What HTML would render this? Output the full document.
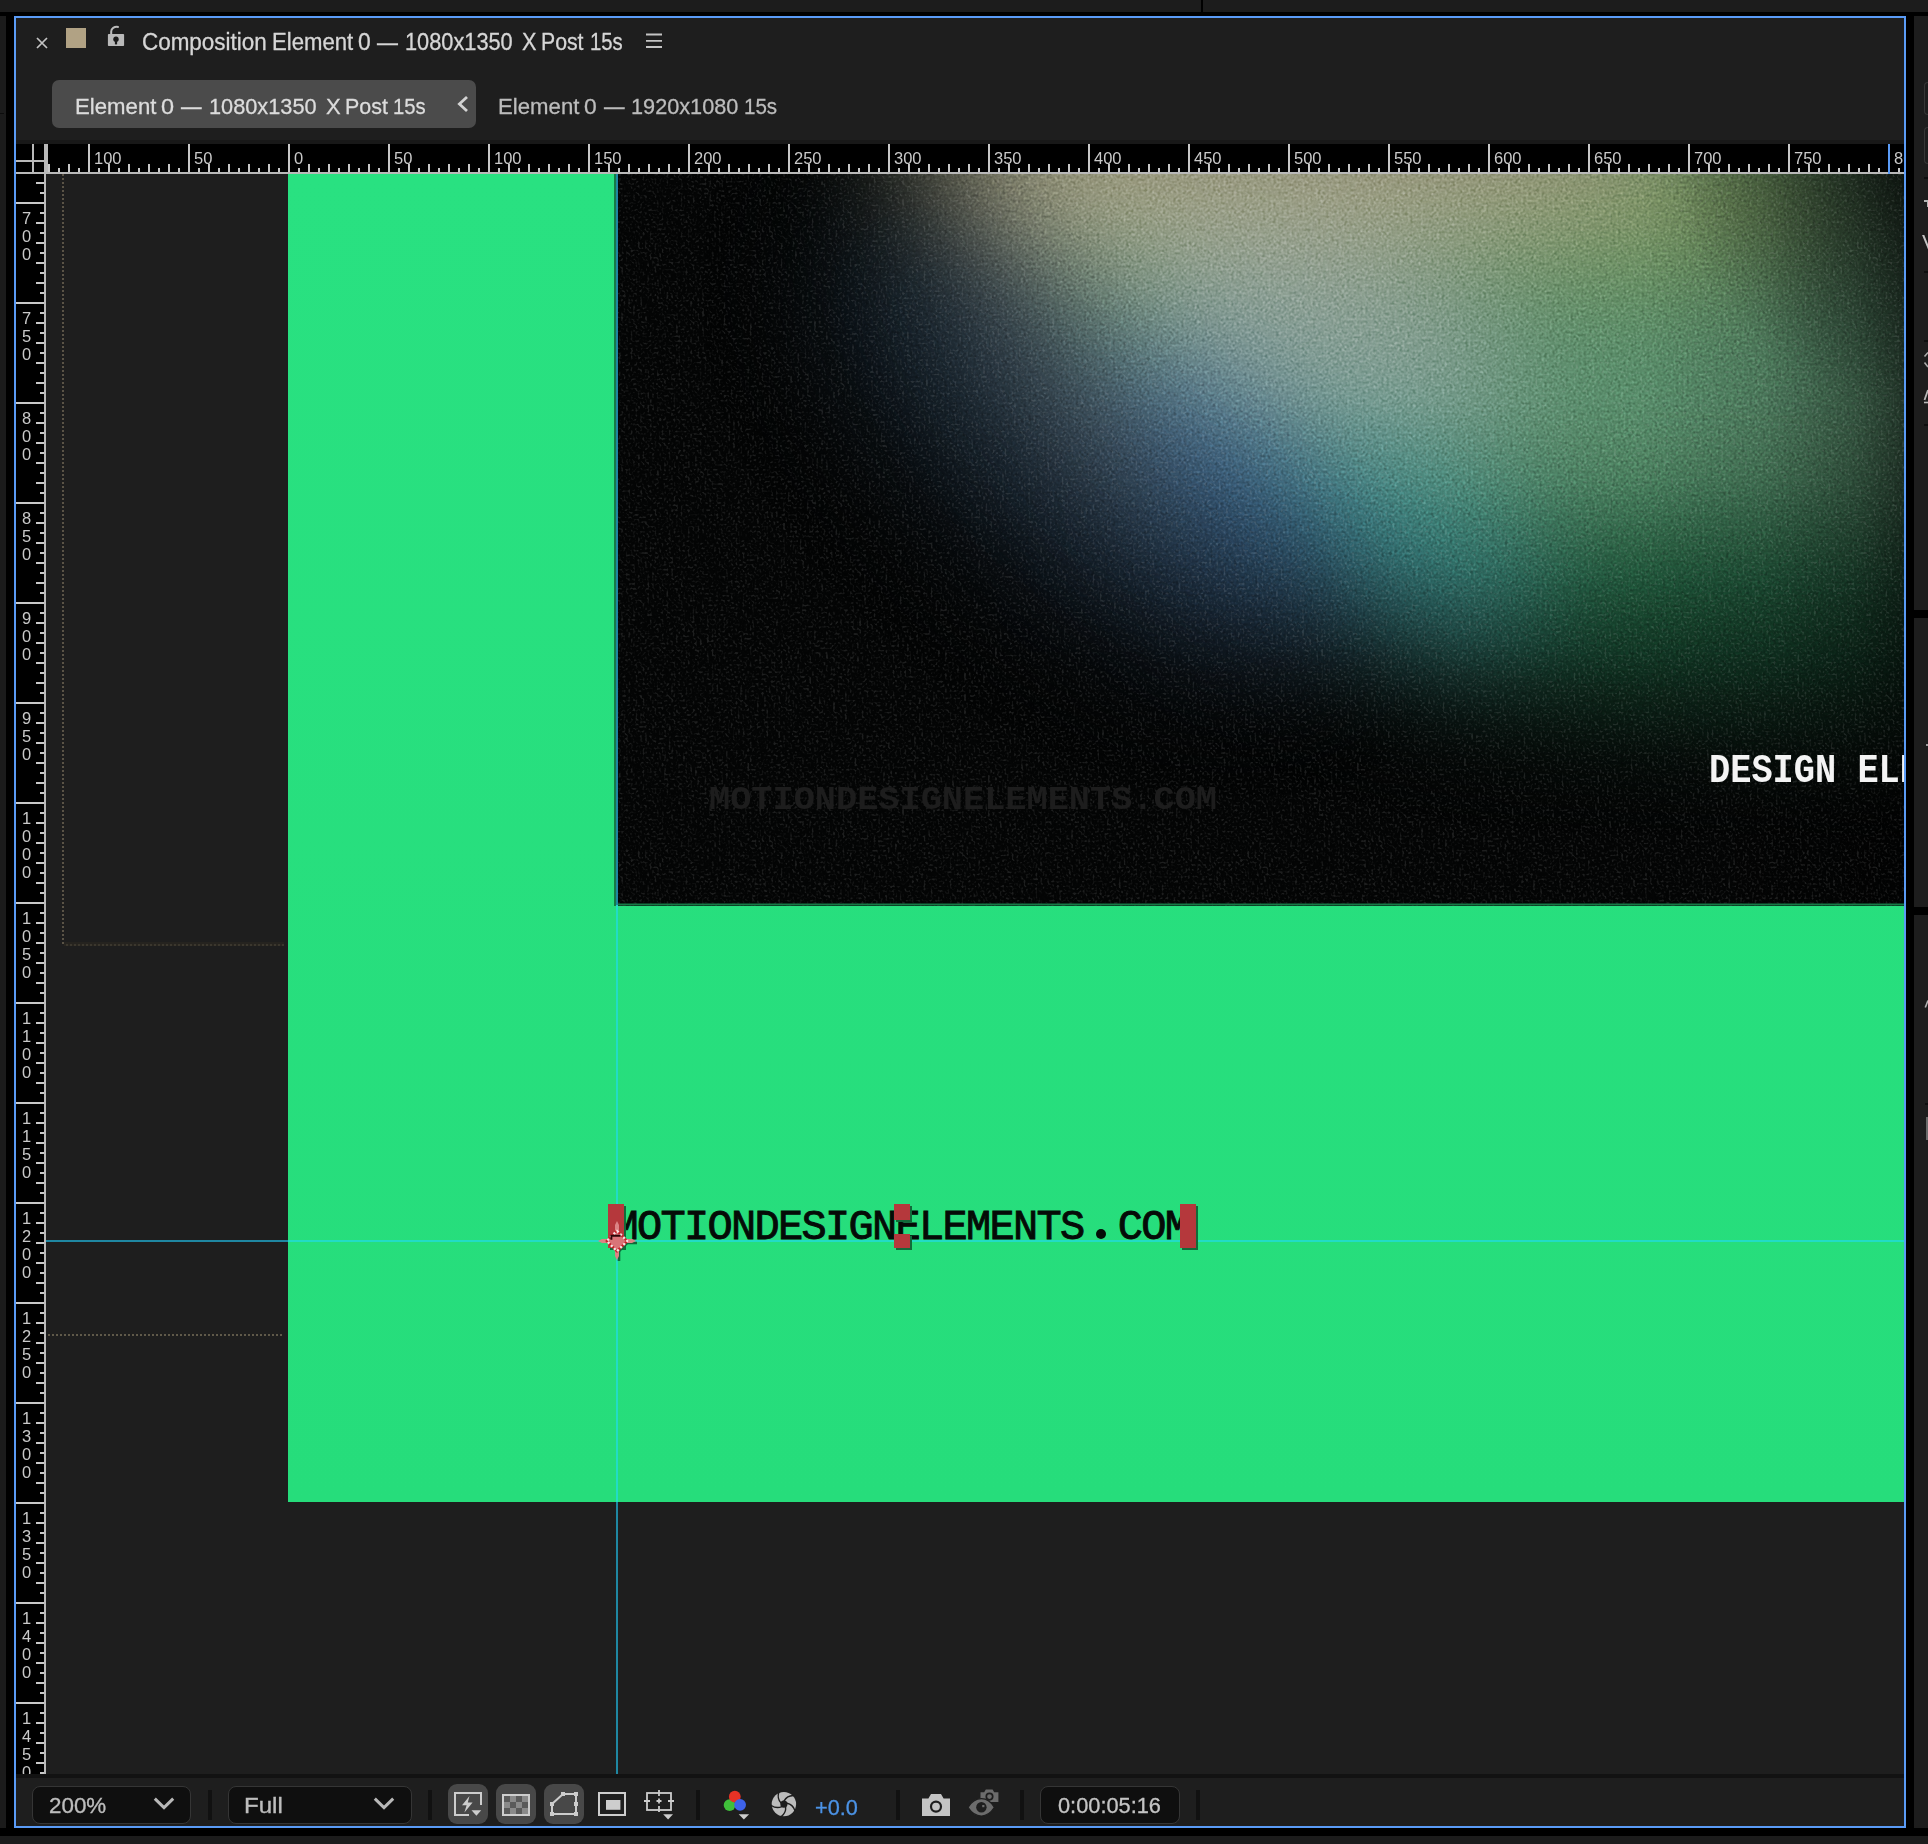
<!DOCTYPE html>
<html lang="en">
<head>
<meta charset="utf-8">
<title>Composition Element 0</title>
<style>
html,body{margin:0;padding:0;overflow:hidden;}
body{width:1928px;height:1844px;overflow:hidden;background:#000;position:relative;font-family:"Liberation Sans",sans-serif;color:#cfcfcf;}
.abs{position:absolute;}
.box{position:absolute;display:block;}
/* outer chrome */
#topbar{left:0;top:0;width:1928px;height:12px;background:#1c1c1c;}
#topdiv{left:1201px;top:0;width:2px;height:12px;background:#000;}
#leftstrip{left:0;top:16px;width:6px;height:1812px;background:#1b1b1b;}
#botbar{left:0;top:1836px;width:1928px;height:8px;background:#1c1c1c;}
#rightstrip{left:1914px;top:16px;width:14px;height:1812px;background:#1d1d1d;}
/* panel */
#panel{left:14px;top:16px;width:1888px;height:1808px;border:2px solid #5a9bf6;background:#1e1e1e;}
#hdrshade{left:16px;top:140px;width:1888px;height:4px;background:#181818;}
/* header text */
.t{position:absolute;white-space:pre;transform-origin:0 0;line-height:1;}
/* rulers */
#hruler{left:46px;top:144px;width:1858px;height:28px;background:#000;overflow:hidden;}
#hruler .tk{position:absolute;left:0;top:0;width:100%;height:28px;}
#hruler span{position:absolute;top:7.3px;font-size:16.5px;line-height:15px;color:#c9c9c9;white-space:pre;}
#hline{left:16px;top:172px;width:1888px;height:2px;background:#b9b9b9;}
#corner{left:16px;top:144px;width:28px;height:28px;background:#000;}
#vruler{left:16px;top:174px;width:28px;height:1600px;background:#000;overflow:hidden;}
#vruler span{position:absolute;left:0;width:21px;text-align:center;font-size:16.5px;line-height:18px;height:18px;color:#c9c9c9;}
#vline{left:44px;top:144px;width:2px;height:1630px;background:#b9b9b9;}
/* viewer */
#viewer{left:46px;top:174px;width:1858px;height:1600px;background:#1e1e1e;overflow:hidden;}
#comp{position:absolute;left:242px;top:0;width:1616px;height:1328px;background:linear-gradient(180deg,#29e181,#26dd7b);}
/* toolbar */
#tbshade{left:16px;top:1774px;width:1888px;height:4px;background:#121212;}
.dd{position:absolute;box-sizing:border-box;border:1.5px solid #353535;background:#0f0f0f;border-radius:8px;}
.sep{position:absolute;width:4px;background:#111;top:1790px;height:30px;}
.btn{position:absolute;top:1784px;width:40px;height:40px;border-radius:9px;background:#484848;}
svg{position:absolute;overflow:visible;}
</style>
</head>
<body>
<div class="box" id="topbar"></div>
<div class="box" id="topdiv"></div>
<div class="box" id="leftstrip"></div>
<div class="box" style="left:0;top:113px;width:4px;height:1px;background:#0c0c0c"></div>
<div class="box" id="botbar"></div>
<div class="box" id="rightstrip"></div>
<div class="box" id="panel"></div>

<!-- header row -->
<svg style="left:36px;top:37px" width="12" height="12" viewBox="0 0 12 12"><path d="M1 1L11 11M11 1L1 11" stroke="#c4c4c4" stroke-width="1.7" fill="none"/></svg>
<div class="box" style="left:66px;top:28px;width:20px;height:20px;background:#b1a284"></div>
<svg style="left:107px;top:25px" width="18" height="22" viewBox="0 0 18 22">
<path d="M4.2 9.6V6.6C4.2 3.3 7.2 1.5 11 1.9" stroke="#bdbdbd" stroke-width="2" fill="none" stroke-linecap="round"/>
<rect x="0.9" y="8.9" width="16.2" height="12.1" rx="0.8" fill="#b9b9b9"/>
<circle cx="9" cy="14.3" r="2.7" fill="#1a1a1a"/><rect x="7.9" y="14.6" width="2.2" height="4.8" fill="#1a1a1a"/>
</svg>
<span class="t" style="left:141.56px;top:30.6px;font-size:23px;color:#d6d6d6;transform:scaleX(0.9753);-webkit-text-stroke:0.3px #d6d6d6">Composition</span><span class="t" style="left:271.68px;top:30.6px;font-size:23px;color:#d6d6d6;transform:scaleX(0.9622);-webkit-text-stroke:0.3px #d6d6d6">Element</span><span class="t" style="left:357.51px;top:30.6px;font-size:23px;color:#d6d6d6;transform:scaleX(0.9928);-webkit-text-stroke:0.3px #d6d6d6">0</span><span class="t" style="left:377.40px;top:30.6px;font-size:23px;color:#d6d6d6;transform:scaleX(0.9087);-webkit-text-stroke:0.3px #d6d6d6">—</span><span class="t" style="left:404.80px;top:30.6px;font-size:23px;color:#d6d6d6;transform:scaleX(0.9461);-webkit-text-stroke:0.3px #d6d6d6">1080x1350</span><span class="t" style="left:522.14px;top:30.6px;font-size:23px;color:#d6d6d6;transform:scaleX(0.9434);-webkit-text-stroke:0.3px #d6d6d6">X</span><span class="t" style="left:541.45px;top:30.6px;font-size:23px;color:#d6d6d6;transform:scaleX(0.9235);-webkit-text-stroke:0.3px #d6d6d6">Post</span><span class="t" style="left:589.71px;top:30.6px;font-size:23px;color:#d6d6d6;transform:scaleX(0.8830);-webkit-text-stroke:0.3px #d6d6d6">15s</span>
<svg style="left:646px;top:33px" width="16" height="16" viewBox="0 0 16 16"><path d="M0 1.5H16M0 7.8H16M0 14H16" stroke="#c4c4c4" stroke-width="1.8" fill="none"/></svg>

<!-- tabs -->
<div class="box" style="left:52px;top:80px;width:424px;height:48px;border-radius:7px;background:#4b4b4b"></div>
<span class="t" style="left:74.54px;top:95.6px;font-size:22.6px;color:#dcdcdc;transform:scaleX(0.9819);-webkit-text-stroke:0.3px #dcdcdc">Element</span><span class="t" style="left:160.66px;top:95.6px;font-size:22.6px;color:#dcdcdc;transform:scaleX(1.0372);-webkit-text-stroke:0.3px #dcdcdc">0</span><span class="t" style="left:180.90px;top:95.6px;font-size:22.6px;color:#dcdcdc;transform:scaleX(0.9098);-webkit-text-stroke:0.3px #dcdcdc">—</span><span class="t" style="left:208.71px;top:95.6px;font-size:22.6px;color:#dcdcdc;transform:scaleX(0.9619);-webkit-text-stroke:0.3px #dcdcdc">1080x1350</span><span class="t" style="left:325.50px;top:95.6px;font-size:22.6px;color:#dcdcdc;transform:scaleX(0.9744);-webkit-text-stroke:0.3px #dcdcdc">X</span><span class="t" style="left:344.50px;top:95.6px;font-size:22.6px;color:#dcdcdc;transform:scaleX(0.9482);-webkit-text-stroke:0.3px #dcdcdc">Post</span><span class="t" style="left:393.21px;top:95.6px;font-size:22.6px;color:#dcdcdc;transform:scaleX(0.8979);-webkit-text-stroke:0.3px #dcdcdc">15s</span>
<svg style="left:457px;top:96px" width="12" height="16" viewBox="0 0 12 16"><path d="M10 1L2.4 8L10 15" stroke="#d4d4d4" stroke-width="2.8" fill="none"/></svg>
<span class="t" style="left:497.54px;top:95.6px;font-size:22.6px;color:#bcbcbc;transform:scaleX(0.9819);-webkit-text-stroke:0.3px #bcbcbc">Element</span><span class="t" style="left:583.99px;top:95.6px;font-size:22.6px;color:#bcbcbc;transform:scaleX(1.0092);-webkit-text-stroke:0.3px #bcbcbc">0</span><span class="t" style="left:603.50px;top:95.6px;font-size:22.6px;color:#bcbcbc;transform:scaleX(0.9098);-webkit-text-stroke:0.3px #bcbcbc">—</span><span class="t" style="left:631.21px;top:95.6px;font-size:22.6px;color:#bcbcbc;transform:scaleX(0.9600);-webkit-text-stroke:0.3px #bcbcbc">1920x1080</span><span class="t" style="left:744.29px;top:95.6px;font-size:22.6px;color:#bcbcbc;transform:scaleX(0.9097);-webkit-text-stroke:0.3px #bcbcbc">15s</span>

<div class="box" id="hdrshade"></div>

<!-- rulers -->
<div class="box" id="corner">
  <div class="abs" style="left:16px;top:0;width:2px;height:28px;background:#b9b9b9"></div>
  <div class="abs" style="left:0;top:16px;width:28px;height:2px;background:#b9b9b9"></div>
</div>
<div class="box" id="hruler">
  <div class="tk" style="background:
    repeating-linear-gradient(90deg,transparent 0,transparent 42px,#c9c9c9 42px,#c9c9c9 44px,transparent 44px,transparent 100px);"></div>
  <div class="tk" style="top:20px;height:8px;background:
    repeating-linear-gradient(90deg,transparent 0,transparent 2px,#c9c9c9 2px,#c9c9c9 4px,transparent 4px,transparent 20px);"></div>
  <div class="tk" style="top:24px;height:4px;background:
    repeating-linear-gradient(90deg,transparent 0,transparent 12px,#c9c9c9 12px,#c9c9c9 14px,transparent 14px,transparent 20px);"></div>
  <div class="abs" style="left:0;top:0;width:1858px;height:28px;will-change:transform"><span style="left:48.0px">100</span><span style="left:148.0px">50</span><span style="left:248.0px">0</span><span style="left:348.0px">50</span><span style="left:448.0px">100</span><span style="left:548.0px">150</span><span style="left:648.0px">200</span><span style="left:748.0px">250</span><span style="left:848.0px">300</span><span style="left:948.0px">350</span><span style="left:1048.0px">400</span><span style="left:1148.0px">450</span><span style="left:1248.0px">500</span><span style="left:1348.0px">550</span><span style="left:1448.0px">600</span><span style="left:1548.0px">650</span><span style="left:1648.0px">700</span><span style="left:1748.0px">750</span><span style="left:1848.0px">800</span></div>
</div>
<div class="box" id="vruler">
  <div class="abs" style="left:0;top:0;width:28px;height:1600px;background:
    repeating-linear-gradient(180deg,transparent 0,transparent 28px,#c9c9c9 28px,#c9c9c9 30px,transparent 30px,transparent 100px);"></div>
  <div class="abs" style="left:20px;top:0;width:8px;height:1600px;background:
    repeating-linear-gradient(180deg,transparent 0,transparent 8px,#c9c9c9 8px,#c9c9c9 10px,transparent 10px,transparent 20px);"></div>
  <div class="abs" style="left:24px;top:0;width:4px;height:1600px;background:
    repeating-linear-gradient(180deg,transparent 0,transparent 18px,#c9c9c9 18px,#c9c9c9 20px,transparent 20px,transparent 20px);"></div>
  <div class="abs" style="left:0;top:0;width:28px;height:1600px;will-change:transform"><span style="top:35px">7</span><span style="top:53px">0</span><span style="top:71px">0</span><span style="top:135px">7</span><span style="top:153px">5</span><span style="top:171px">0</span><span style="top:235px">8</span><span style="top:253px">0</span><span style="top:271px">0</span><span style="top:335px">8</span><span style="top:353px">5</span><span style="top:371px">0</span><span style="top:435px">9</span><span style="top:453px">0</span><span style="top:471px">0</span><span style="top:535px">9</span><span style="top:553px">5</span><span style="top:571px">0</span><span style="top:635px">1</span><span style="top:653px">0</span><span style="top:671px">0</span><span style="top:689px">0</span><span style="top:735px">1</span><span style="top:753px">0</span><span style="top:771px">5</span><span style="top:789px">0</span><span style="top:835px">1</span><span style="top:853px">1</span><span style="top:871px">0</span><span style="top:889px">0</span><span style="top:935px">1</span><span style="top:953px">1</span><span style="top:971px">5</span><span style="top:989px">0</span><span style="top:1035px">1</span><span style="top:1053px">2</span><span style="top:1071px">0</span><span style="top:1089px">0</span><span style="top:1135px">1</span><span style="top:1153px">2</span><span style="top:1171px">5</span><span style="top:1189px">0</span><span style="top:1235px">1</span><span style="top:1253px">3</span><span style="top:1271px">0</span><span style="top:1289px">0</span><span style="top:1335px">1</span><span style="top:1353px">3</span><span style="top:1371px">5</span><span style="top:1389px">0</span><span style="top:1435px">1</span><span style="top:1453px">4</span><span style="top:1471px">0</span><span style="top:1489px">0</span><span style="top:1535px">1</span><span style="top:1553px">4</span><span style="top:1571px">5</span><span style="top:1589px">0</span></div>
</div>
<div class="box" id="hline"></div>
<div class="box" id="vline"></div>
<div class="box" style="left:44px;top:144px;width:4px;height:30px;background:#b9b9b9"></div>
<div class="box" style="left:1888px;top:144px;width:2px;height:30px;background:#5a9bf6"></div>

<!-- viewer -->
<div class="box" id="viewer">
  <!-- dotted layer outlines -->
  <div class="abs" style="left:16px;top:0;width:2px;height:770px;background:repeating-linear-gradient(180deg,#5a5346 0,#5a5346 2px,transparent 2px,transparent 4px)"></div>
  <div class="abs" style="left:18px;top:768px;width:220px;height:2px;background:#25231f"></div><div class="abs" style="left:18px;top:770px;width:220px;height:2px;background:repeating-linear-gradient(90deg,#28251f 0,#28251f 2px,#3b372e 2px,#3b372e 4px)"></div>
  <div class="abs" style="left:2px;top:1160px;width:236px;height:2px;background:repeating-linear-gradient(90deg,#5f5949 0,#5f5949 2px,transparent 2px,transparent 4px)"></div>
  <div id="comp"></div>
  <svg style="left:568px;top:0;isolation:isolate" width="1290" height="732" viewBox="614 174 1290 732">
  <defs>
    <filter id="b80" filterUnits="userSpaceOnUse" x="300" y="-200" width="2000" height="1500" color-interpolation-filters="sRGB"><feGaussianBlur stdDeviation="72"/></filter>
    <filter id="b60" filterUnits="userSpaceOnUse" x="300" y="-200" width="2000" height="1500" color-interpolation-filters="sRGB"><feGaussianBlur stdDeviation="60"/></filter>
    <filter id="grain" x="0" y="0" width="100%" height="100%" color-interpolation-filters="sRGB">
      <feTurbulence type="fractalNoise" baseFrequency="0.38" numOctaves="1" seed="7"/>
      <feColorMatrix type="matrix" values="1 1 1 0 -1  1 1 1 0 -1  1 1 1 0 -1  0 0 0 0 1"/>
    </filter>
    <filter id="specks" x="0" y="0" width="100%" height="100%" color-interpolation-filters="sRGB">
      <feTurbulence type="fractalNoise" baseFrequency="0.42" numOctaves="1" seed="23"/>
      <feColorMatrix type="matrix" values="0 0 0 0 1  0 0 0 0 1  0 0 0 0 1  3 3 0 0 -3.05"/>
    </filter>
    <linearGradient id="gedge" x1="0" x2="1" y1="0" y2="0"><stop offset="0" stop-color="#000" stop-opacity="0"/><stop offset="0.45" stop-color="#000" stop-opacity="0.16"/><stop offset="0.8" stop-color="#000" stop-opacity="0.42"/><stop offset="1" stop-color="#000" stop-opacity="0.66"/></linearGradient>
    <radialGradient id="gcorner" cx="1930" cy="150" r="260" gradientUnits="userSpaceOnUse"><stop offset="0" stop-color="#000" stop-opacity="0.7"/><stop offset="0.45" stop-color="#000" stop-opacity="0.36"/><stop offset="1" stop-color="#000" stop-opacity="0"/></radialGradient>
    <clipPath id="imgclip"><rect x="614" y="174" width="1290" height="732"/></clipPath>
    <linearGradient id="gfall" x1="0" x2="0" y1="400" y2="840" gradientUnits="userSpaceOnUse">
      <stop offset="0" stop-color="#fff"/><stop offset="0.18" stop-color="#ececec"/><stop offset="0.36" stop-color="#c4c4c4"/><stop offset="0.545" stop-color="#8a8a8a"/><stop offset="0.68" stop-color="#565656"/><stop offset="0.82" stop-color="#242424"/><stop offset="1" stop-color="#000"/>
    </linearGradient>
    <mask id="glow" maskUnits="userSpaceOnUse" x="614" y="174" width="1290" height="732">
      <g filter="url(#b80)">
        <path d="M905 60C975 315 1078 458 1158 518C1258 593 1358 668 1528 748L2100 830L2100 60Z" fill="#fff"/>
      </g>
    </mask>
    <mask id="fall" maskUnits="userSpaceOnUse" x="614" y="174" width="1290" height="732">
      <rect x="614" y="174" width="1290" height="732" fill="url(#gfall)"/>
    </mask>
  </defs>
  <rect x="614" y="174" width="1290" height="732" fill="#030404"/>
  <g clip-path="url(#imgclip)">
    <g filter="url(#b60)"><ellipse cx="1075" cy="440" rx="300" ry="120" fill="#131e29" transform="rotate(42 1075 440)"/></g>
    <g mask="url(#fall)"><g mask="url(#glow)">
      <rect x="614" y="174" width="1290" height="732" fill="#578b69"/>
      <g filter="url(#b60)">
        <ellipse cx="1700" cy="700" rx="400" ry="170" fill="#1f6a44"/>
        <ellipse cx="1620" cy="190" rx="250" ry="88" fill="#718e56"/>
        <ellipse cx="1345" cy="605" rx="190" ry="160" fill="#3f9691"/>
        <ellipse cx="1145" cy="568" rx="190" ry="230" fill="#3b648c" transform="rotate(-40 1145 568)"/>
        <ellipse cx="990" cy="360" rx="100" ry="250" fill="#566670" transform="rotate(-33 990 360)"/>
        <ellipse cx="1200" cy="150" rx="480" ry="110" fill="#a19e81"/>
        <ellipse cx="1325" cy="335" rx="200" ry="88" fill="#879e95" transform="rotate(15 1325 335)"/>
      </g>
    </g></g>
    <rect x="1640" y="174" width="270" height="732" fill="url(#gedge)"/>
    <rect x="1600" y="174" width="310" height="420" fill="url(#gcorner)"/>
  </g>
  <rect x="614" y="174" width="1290" height="732" filter="url(#grain)" style="mix-blend-mode:overlay" opacity="0.2"/>
  <rect x="614" y="174" width="1290" height="732" filter="url(#specks)" opacity="0.1"/>
  <text x="709" y="808.5" font-family="Liberation Mono" font-weight="700" font-size="33.5" fill="#1d1d1d" textLength="508" lengthAdjust="spacingAndGlyphs">MOTIONDESIGNELEMENTS.COM</text>
  <text x="1709" y="781.5" font-family="Liberation Mono" font-weight="700" font-size="40.5" fill="#f4f4f4" textLength="212" lengthAdjust="spacingAndGlyphs" clip-path="url(#imgclip)">DESIGN ELE</text>
  <rect x="614" y="174" width="2" height="732" fill="#167a46"/>
  <rect x="614" y="903.5" width="1290" height="2" fill="#167a46"/>
</svg>

  <!-- guides -->
<div class="abs" style="left:570px;top:0;width:2px;height:1600px;background:#1f87a2"></div>
<div class="abs" style="left:570px;top:731px;width:2px;height:597px;background:#22dcc6"></div>
<div class="abs" style="left:0;top:1066px;width:1858px;height:2px;background:#1f87a2"></div>
<div class="abs" style="left:242px;top:1066px;width:1616px;height:2px;background:#22dcc6"></div>
<!-- text layer -->
<div class="t" id="maintext" style="left:567.5px;top:1033.4px;font-family:'Liberation Mono',monospace;font-weight:400;font-size:42px;letter-spacing:-1.7px;color:#050b07;-webkit-text-stroke:0.9px #050b07;">MOTIONDESIGNELEMENTS<span style="display:inline-block;width:10px;height:10px;border-radius:50%;background:#050b07;margin:0 12.05px"></span>COM</div>
<!-- handles -->
<div class="abs" style="left:562px;top:1030px;width:16px;height:44px;background:#b5383c;box-shadow:2px 2px 0 #116a3a"></div>
<div class="abs" style="left:848px;top:1030px;width:16px;height:16px;background:#b5383c;box-shadow:2px 2px 0 #116a3a"></div>
<div class="abs" style="left:848px;top:1060px;width:16px;height:14px;background:#b5383c;box-shadow:2px 2px 0 #116a3a"></div>
<div class="abs" style="left:1134px;top:1030px;width:16px;height:44px;background:#b5383c;box-shadow:2px 2px 0 #116a3a"></div>
<!-- anchor point -->
<svg style="left:551px;top:1046px" width="40" height="42" viewBox="-20 -21 40 42">
  <g transform="translate(2 2)"><path d="M6 0H18M0 6V18" stroke="#0f6a3a" stroke-width="2.6" fill="none"/><rect x="-7" y="-7" width="14" height="14" transform="rotate(45)" fill="#0f6a3a"/></g>
  <path d="M-19 0L-15 -2H15L19 0L15 2H-15ZM0 -20L2 -16V15L0 19L-2 15V-16Z" fill="#db8485"/>
  <rect x="-7.2" y="-7.2" width="14.4" height="14.4" transform="rotate(45)" fill="#d97478" stroke="#c5252c" stroke-width="2.4"/>
  <rect x="-7.2" y="-7.2" width="14.4" height="14.4" transform="rotate(45)" fill="none" stroke="#f7e4e4" stroke-width="2.4" stroke-dasharray="2.2 2.2"/>
  <path d="M-5.6 -1.2V-5.2H3.6" stroke="#2a0506" stroke-width="1.9" fill="none"/>
</svg>

</div>

<div class="box" id="tbshade"></div>
<!-- zoom dropdown -->
<div class="dd" style="left:32px;top:1786px;width:159px;height:38px"></div>
<div class="t" style="left:48.6px;top:1795.2px;font-size:22.5px;color:#bdbdbd;-webkit-text-stroke:0.35px #bdbdbd;transform:scaleX(0.995)">200%</div>
<svg style="left:153px;top:1797px" width="22" height="14" viewBox="0 0 22 14"><path d="M1.8 1.6L11 10.6L20.2 1.6" stroke="#b8b8b8" stroke-width="3" fill="none"/></svg>
<div class="sep" style="left:208px"></div>
<!-- resolution dropdown -->
<div class="dd" style="left:228px;top:1786px;width:184px;height:38px"></div>
<div class="t" style="left:244.4px;top:1795.2px;font-size:22.5px;color:#bdbdbd;-webkit-text-stroke:0.35px #bdbdbd;transform:scaleX(1.07)">Full</div>
<svg style="left:373px;top:1797px" width="22" height="14" viewBox="0 0 22 14"><path d="M1.8 1.6L11 10.6L20.2 1.6" stroke="#b8b8b8" stroke-width="3" fill="none"/></svg>
<div class="sep" style="left:428px"></div>
<!-- fast preview -->
<div class="btn" style="left:448px"></div>
<svg style="left:454px;top:1792px" width="28" height="24" viewBox="0 0 28 24">
  <path d="M27 13V1H1V23H15" stroke="#cdcdcd" stroke-width="2" fill="none"/>
  <path d="M15.5 4L8 13.2H12.6L10.4 20.5L18.6 10.6H13.8Z" fill="#cdcdcd"/>
  <path d="M17.5 18.2H27.2L22.4 23.8Z" fill="#cdcdcd"/>
</svg>
<!-- transparency grid -->
<div class="btn" style="left:496px"></div>
<svg style="left:502px;top:1794px" width="28" height="22" viewBox="0 0 28 22">
  <rect x="1" y="1" width="26" height="20" fill="#5a5a5a" stroke="#cdcdcd" stroke-width="2"/>
  <g fill="#8a8a8a"><rect x="8" y="2" width="6" height="6"/><rect x="20" y="2" width="6" height="6"/><rect x="2" y="8" width="6" height="6"/><rect x="14" y="8" width="6" height="6"/><rect x="8" y="14" width="6" height="6"/><rect x="20" y="14" width="6" height="6"/></g>
</svg>
<!-- mask / shape path -->
<div class="btn" style="left:544px"></div>
<svg style="left:550px;top:1792px" width="28" height="24" viewBox="0 0 28 24">
  <path d="M2 22V12L13 2H26V22Z" stroke="#cdcdcd" stroke-width="2" fill="none"/>
  <g fill="#cdcdcd"><rect x="0" y="20" width="4" height="4"/><rect x="0" y="10" width="4" height="4"/><rect x="11" y="0" width="4" height="4"/><rect x="24" y="0" width="4" height="4"/><rect x="24" y="10" width="4" height="4"/><rect x="24" y="20" width="4" height="4"/></g>
</svg>
<!-- region of interest -->
<svg style="left:598px;top:1792px" width="28" height="24" viewBox="0 0 28 24">
  <rect x="1" y="1" width="26" height="22" stroke="#cdcdcd" stroke-width="2" fill="none"/>
  <rect x="8" y="8" width="14.4" height="9.8" fill="#cdcdcd"/>
</svg>
<!-- grid & guides -->
<svg style="left:644px;top:1790px" width="30" height="30" viewBox="0 0 30 30">
  <rect x="3" y="3" width="24" height="17" stroke="#cdcdcd" stroke-width="1.8" fill="none"/>
  <path d="M15 0V6M15 8.5V13.5M15 16V22M0 11H6M12.5 11H17.5M24 11H30" stroke="#cdcdcd" stroke-width="1.8" fill="none"/>
  <path d="M19.2 24.2H29L24.1 29.6Z" fill="#cdcdcd"/>
</svg>
<div class="sep" style="left:696px"></div>
<!-- channels -->
<svg style="left:722px;top:1789px" width="30" height="32" viewBox="722 1789 30 32">
  <circle cx="729.6" cy="1805.1" r="5.9" fill="#3fbf3a"/>
  <circle cx="734.8" cy="1796.7" r="5.9" fill="#e63226"/>
  <circle cx="740.1" cy="1804.8" r="5.9" fill="#3e63ea"/>
  <path d="M738.7 1814.2H749.1L743.9 1819.6Z" fill="#cdcdcd"/>
</svg>
<!-- exposure reset (aperture) -->
<svg style="left:771px;top:1791px" width="26" height="26" viewBox="-12.9 -13.1 26 26">
  <circle r="12.2" fill="#bcbcbc"/>
  <g stroke="#1c1c1c" stroke-width="1.4" fill="none" stroke-linecap="round">
    <path d="M-5.2 -11.6Q-6.9 -5.5 -3 -1.2"/>
    <path d="M-5.2 -11.6Q-6.9 -5.5 -3 -1.2" transform="rotate(72)"/>
    <path d="M-5.2 -11.6Q-6.9 -5.5 -3 -1.2" transform="rotate(144)"/>
    <path d="M-5.2 -11.6Q-6.9 -5.5 -3 -1.2" transform="rotate(216)"/>
    <path d="M-5.2 -11.6Q-6.9 -5.5 -3 -1.2" transform="rotate(288)"/>
  </g>
  <circle r="3.6" fill="#1c1c1c"/>
</svg>
<div class="t" style="left:815.4px;top:1797px;font-size:22px;color:#4c93e6;-webkit-text-stroke:0.3px #4c93e6;transform:scaleX(0.985)">+0.0</div>
<div class="sep" style="left:896px"></div>
<!-- snapshot camera -->
<svg style="left:922px;top:1794px" width="28" height="22" viewBox="0 0 28 22">
  <path d="M0 4.6H6.4L9 0H19L21.6 4.6H28V22H0Z" fill="#c4c4c4"/>
  <circle cx="14" cy="12.6" r="5" fill="none" stroke="#1e1e1e" stroke-width="2.2"/>
</svg>
<!-- show snapshot (dim) -->
<svg style="left:968px;top:1789px" width="31" height="27" viewBox="0 0 31 27">
  <path d="M12.5 3.2H16.2L17.8 0.4H24.6L26.2 3.2H30.4V13H12.5Z" fill="#6c6c6c"/>
  <circle cx="21.5" cy="7.6" r="3.2" fill="none" stroke="#1e1e1e" stroke-width="1.7"/>
  <path d="M0 18.4C4 11.6 9 9.6 13.4 9.6C18 9.6 22.6 11.8 26.4 18.4C22.6 24.4 18 27 13.4 27C9 27 4 24.6 0 18.4Z" fill="#6c6c6c" stroke="#1e1e1e" stroke-width="1.2"/>
  <circle cx="13.4" cy="18.2" r="5.2" fill="#1e1e1e"/>
  <rect x="14.2" y="16" width="2.2" height="2.2" fill="#6c6c6c"/>
</svg>
<div class="sep" style="left:1020px"></div>
<!-- timecode -->
<div class="dd" style="left:1040px;top:1786px;width:140px;height:38px"></div>
<div class="t" style="left:1058.2px;top:1794.5px;font-size:22px;color:#c4c4c4;-webkit-text-stroke:0.3px #c4c4c4;transform:scaleX(0.99)">0:00:05:16</div>
<div class="sep" style="left:1196px"></div>

<!-- slivers of the neighbouring panel -->
<div class="box" style="left:1914px;top:610px;width:14px;height:8px;background:#000"></div>
<div class="box" style="left:1914px;top:907px;width:14px;height:8px;background:#000"></div>
<div class="box" style="left:1924px;top:82px;width:4px;height:33px;border:1.5px solid #363636;border-right:0;border-radius:6px 0 0 6px;box-sizing:border-box"></div>
<div class="box" style="left:1924px;top:127px;width:4px;height:37px;border:1.5px solid #363636;border-right:0;border-radius:6px 0 0 6px;box-sizing:border-box"></div>
<div class="box" style="left:1924px;top:177px;width:4px;height:2px;background:#0e0e0e"></div>
<div class="box" style="left:1924px;top:200px;width:4px;height:2px;background:#b4b4b4"></div>
<div class="box" style="left:1927px;top:200px;width:1px;height:7px;background:#b4b4b4"></div>
<div class="box" style="left:1920px;top:228px;width:8px;height:30px;overflow:hidden"><div class="t" style="left:2px;top:4px;font-size:22px;color:#c4c4c4">V</div></div>
<div class="box" style="left:1924px;top:271px;width:4px;height:2px;background:#0e0e0e"></div>
<div class="box" style="left:1924px;top:340px;width:4px;height:2px;background:#0e0e0e"></div>
<svg style="left:1924px;top:351px" width="4" height="18" viewBox="0 0 4 18"><path d="M0.5 5.5L4 1.5M0.5 11.5L4 16" stroke="#a8a8a8" stroke-width="1.6" fill="none"/></svg>
<svg style="left:1924px;top:388px" width="4" height="16" viewBox="0 0 4 16"><path d="M0.5 12L4 2" stroke="#b8b8b8" stroke-width="1.8" fill="none"/><path d="M0 14.5H4" stroke="#b8b8b8" stroke-width="1.6"/></svg>
<div class="box" style="left:1924px;top:424px;width:4px;height:2px;background:#0e0e0e"></div>
<div class="box" style="left:1926px;top:744px;width:2px;height:2px;background:#9a9a9a"></div>
<svg style="left:1925px;top:1000px" width="3" height="8" viewBox="0 0 3 8"><path d="M0.3 7.5L3 0.5" stroke="#b0b0b0" stroke-width="1.6" fill="none"/></svg>
<div class="box" style="left:1925px;top:1103px;width:3px;height:2px;background:#0e0e0e"></div>
<div class="box" style="left:1926px;top:1117px;width:2px;height:23px;background:#6a6a6a"></div>

</body>
</html>
